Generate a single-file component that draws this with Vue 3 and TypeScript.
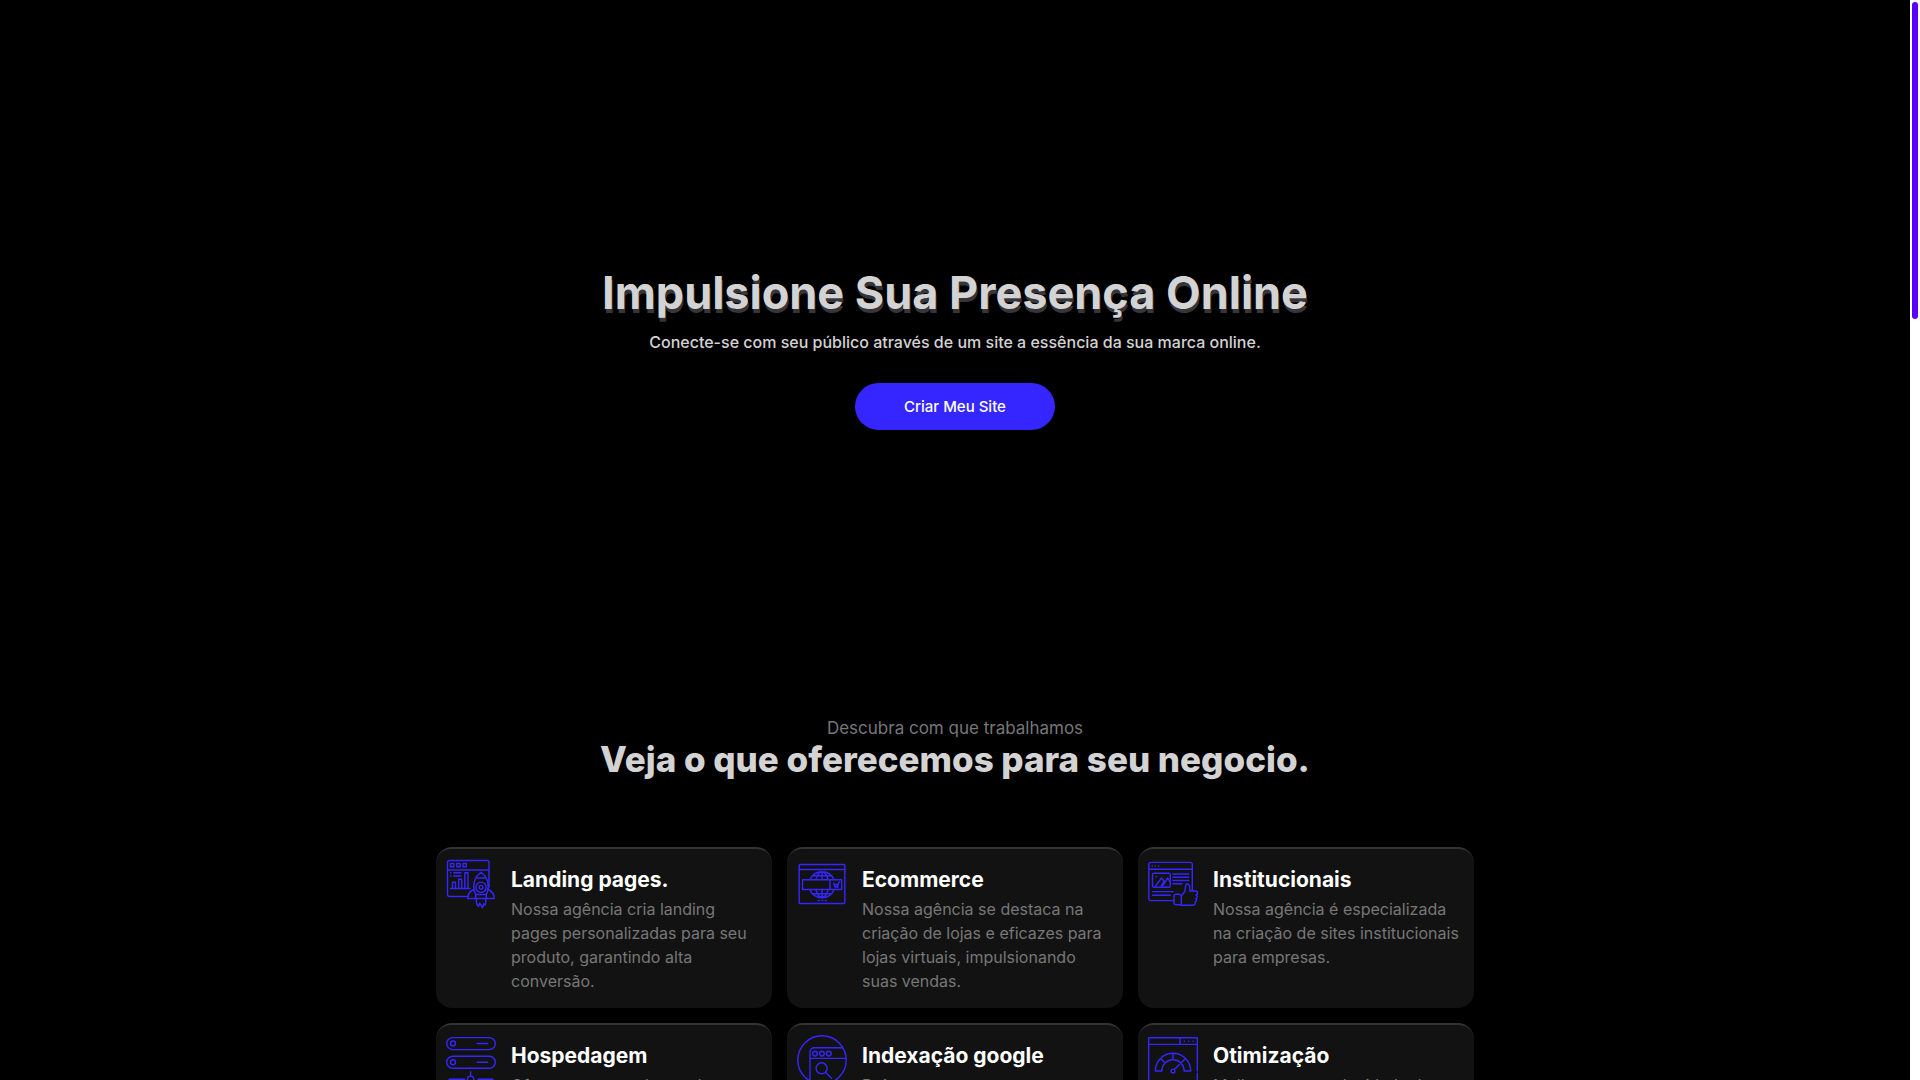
<script setup lang="ts">
interface Service {
  icon: 'landing' | 'shop' | 'institutional' | 'hosting' | 'search' | 'speed'
  title: string
  text: string
}

const services: Service[] = [
  { icon: 'landing', title: 'Landing pages.', text: 'Nossa agência cria landing pages personalizadas para seu produto, garantindo alta conversão.' },
  { icon: 'shop', title: 'Ecommerce', text: 'Nossa agência se destaca na criação de lojas e eficazes para lojas virtuais, impulsionando suas vendas.' },
  { icon: 'institutional', title: 'Institucionais', text: 'Nossa agência é especializada na criação de sites institucionais para empresas.' },
  { icon: 'hosting', title: 'Hospedagem', text: 'Oferecemos uma hospedagem segura e estável para manter seu site sempre no ar.' },
  { icon: 'search', title: 'Indexação google', text: 'Deixe sua empresa nos resultados das buscas do google.' },
  { icon: 'speed', title: 'Otimização', text: 'Melhoramos a velocidade do seu site para uma navegação mais rápida.' },
]
</script>

<template>
  <div class="viewport">
    <main class="page">
      <section class="hero">
        <h1>Impulsione Sua Presença Online</h1>
        <p>Conecte-se com seu público através de um site a essência da sua marca online.</p>
        <button type="button" class="cta">Criar Meu Site</button>
      </section>

      <section class="offer">
        <p class="kicker">Descubra com que trabalhamos</p>
        <h2>Veja o que oferecemos para seu negocio.</h2>
        <div class="cards">
          <article v-for="s in services" :key="s.title" class="card">
            <svg class="icon" viewBox="0 0 50 50" aria-hidden="true">
              <g v-if="s.icon === 'landing'">
                <path d="M22 37.5H3.500a2 2 0 0 1-2-2V3.500a2 2 0 0 1 2-2h37.500a2 2 0 0 1 2 2V28M1.500 11h41.500" />
                <path d="M4.5 4.5h3.4v3.2H4.5zM10.8 4.5h3.4v3.2h-3.4zM17 4.5h3.4v3.2H17z" />
                <path d="M4.500 13.7h.4M4.500 17h.4M7.800 13.7H15M7.800 17H15M4.500 29.500H24" />
                <path d="M6.5 29.5v-6.2h3v6.2M12.7 29.5v-9.2h3v9.2M18.8 29.5V13.7h3.2v15.8" />
                <path d="M35 13.3c-4.600 3.500-7.300 8.200-7.300 14.200 0 3 .8 5.600 2 8h10.600c1.200-2.400 2-5 2-8 0-6-2.700-10.700-7.300-14.200zM31 19h8M29.700 35.500v4h10.600v-4" />
                <circle cx="35" cy="28.300" r="5.200" /><circle cx="35" cy="28.300" r="1.900" />
                <path d="M28 30.500c-4 1.600-6.300 4-6.300 9h8M42 30.500c4 1.600 6.300 4 6.300 9h-8" />
                <path d="M30.500 40c-.5 3-.2 5.500 2 7.500l1.200-3.300 2.800 4.500 1.300-4 1.400 1.300c1-2 .8-4 .3-6" />
              </g>
              <g v-else-if="s.icon === 'shop'">
                <rect x="2.200" y="5.500" width="45.600" height="39" rx="1" />
                <path d="M2.200 10.500H47.800M5.500 20.700h39.200v9.800H5.500zM33 20.700v9.800M21.300 41.500h1M24.800 41.500h1M28.200 41.500h1" />
                <path d="M13 20.700a13 13 0 0 1 24 0M13 30.700a13 13 0 0 0 24 0M25 12.700v8M25 30.700v8M19 20.700c.8-4 3-7.300 6-8 3 .7 5.200 4 6 8M19 30.700c.8 4 3 7.300 6 8 3-.7 5.200-4 6-8M15.500 16.700h19M15.500 34.700h19" />
                <path d="M36.800 24.200l1 3.300h2.800l1.200-4.300h1M38 25.500h3.200M38.700 28.500h.1M40.700 28.500h.1" />
              </g>
              <g v-else-if="s.icon === 'institutional'">
                <path d="M26 41.600H2.800a2 2 0 0 1-2-2V5.400a2 2 0 0 1 2-2h39.500a2 2 0 0 1 2 2V32M.8 10.300h43.500M4.200 7h.2M7.200 7h.2M10.500 7h.2" />
                <rect x="4.500" y="14.200" width="17.800" height="14" rx="1.500" />
                <path d="M7.500 27l6-8 2.600 3-3 5M14.500 27l5.200-8 2.400 4M7.800 17.600h.8M25 15h15.700M25 18.200h15.700M25 21.500h15.700M25 24.800h9M4.500 32.600h20.800M4.500 36.200h17.800" />
                <path d="M28 35.200h3.600l1.700 1.400v9.200H28a2 2 0 0 1-2-2v-6.600a2 2 0 0 1 2-2z" />
                <path d="M33.300 37l3.500-4.500 1-6.700c1.500-2 3.500-.5 3.700 1.200l.3 5h6.200c2.200.5 2 3.400 0 4 1.800.6 1.600 3.300-.4 3.700 1.500.7 1.200 3-.6 3.300.8 1.500-.2 3.300-2 3.300H33.300" />
              </g>
              <g v-else-if="s.icon === 'hosting'">
                <rect x=".7" y="2.600" width="48.600" height="12" rx="6" /><rect x=".7" y="21.300" width="48.600" height="12" rx="6" />
                <circle cx="7" cy="8.500" r="2.500" /><circle cx="7" cy="27.200" r="2.500" />
                <path d="M31 8.500h10.700M31 27.200h10.700M24.600 36.700V41M3 44.300h15.500M32 44.300h15" />
                <circle cx="24.600" cy="44.300" r="3.200" />
              </g>
              <g v-else-if="s.icon === 'search'">
                <circle cx="25" cy="25" r="24.200" />
                <path d="M13 46V17a4.300 4.300 0 0 1 4.300-4.300h27.900M13 23.400h36" />
                <circle cx="18" cy="18.600" r="2.400" /><circle cx="24.900" cy="18.600" r="2.400" /><circle cx="31.800" cy="18.600" r="2.400" />
                <circle cx="24.600" cy="33.300" r="5.500" /><path d="M28.500 37.200l6 6" />
              </g>
              <g v-else>
                <path d="M.7 50V2.700h48.600V36M49.300 38.200V50M.7 9.400h48.600M32 2.700v6.700M36.300 6.200h.2M40.700 6.200h.2M45 6.200h.2" />
                <path d="M7.300 36a17.700 17.700 0 0 1 35.400 0h-6.500a11.200 11.200 0 0 0-22.400 0zM25 18.300v6.500M12.500 23.500l4.600 4.600M37.500 23.500l-4.600 4.600M26.400 34.600l5-5" />
                <circle cx="25" cy="36" r="1.900" />
              </g>
            </svg>
            <div class="body">
              <h3>{{ s.title }}</h3>
              <p>{{ s.text }}</p>
            </div>
          </article>
        </div>
      </section>
    </main>
    <div class="track" aria-hidden="true"><div class="thumb"></div></div>
  </div>
</template>

<style>
body {
  margin: 0;
  background: #000;
}
</style>

<style scoped>
.viewport {
  display: flex;
  height: 100vh;
  overflow: hidden;
  font-family: Inter, sans-serif;
}
.page {
  flex: 1;
  min-width: 0;
  background: #000;
}
h1, h2, h3, p {
  margin: 0;
}
.hero {
  display: flex;
  flex-direction: column;
  align-items: center;
  padding: 264px 20px 286px;
  text-align: center;
}
h1 {
  color: #d3d3d3;
  font-size: 45px;
  line-height: 58px;
  font-weight: 700;
  text-shadow: 1px 4px 0 #37343a;
}
.hero p {
  margin-top: 8px;
  color: #d3d3d3;
  font-size: 16px;
  line-height: 24px;
  font-weight: 500;
}
.cta {
  width: 200px;
  height: 47px;
  margin-top: 29px;
  border: 0;
  border-radius: 24px;
  background: #3526ff;
  color: #fff;
  font: 500 15px/20px Inter, sans-serif;
}
.offer {
  display: flex;
  flex-direction: column;
  align-items: center;
  text-align: center;
}
.kicker {
  color: #777;
  font-size: 17px;
  line-height: 24px;
}
h2 {
  color: #d3d3d3;
  font-size: 35px;
  line-height: 38px;
  font-weight: 800;
}
.cards {
  display: grid;
  grid-template-columns: repeat(3, 336px);
  gap: 15px;
  margin-top: 69px;
  text-align: left;
}
.card {
  display: flex;
  align-items: flex-start;
  gap: 15px;
  padding: 10px 10px 15px;
  border-top: 2px solid #333;
  border-radius: 16px;
  background: #121212;
}
.icon {
  flex: none;
  width: 50px;
  height: 50px;
  fill: none;
  stroke: #3526ff;
  stroke-width: 1.4;
  stroke-linecap: round;
  stroke-linejoin: round;
}
.body {
  padding-top: 8px;
}
h3 {
  color: #fff;
  font-size: 21px;
  line-height: 26px;
  font-weight: 700;
}
.body p {
  margin-top: 4px;
  color: #777;
  font-size: 16px;
  line-height: 24px;
}
.track {
  flex: none;
  box-sizing: border-box;
  width: 10px;
  padding: 2px;
  background: #fff;
}
.thumb {
  height: 317px;
  border-radius: 3px;
  background: #5a00ff;
}
</style>
